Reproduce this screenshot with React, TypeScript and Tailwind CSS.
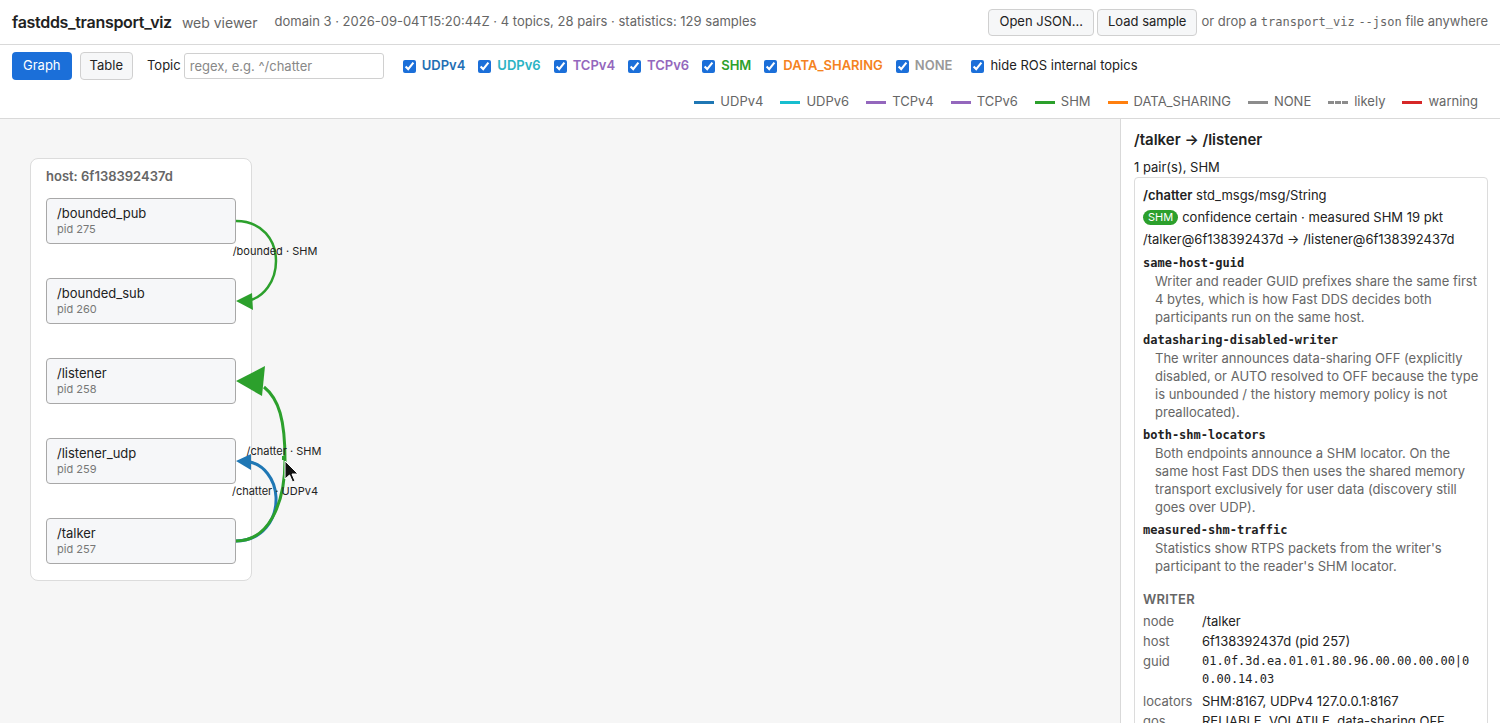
import React from "react"

const sans = "font-['Inter','Liberation_Sans',Arial,sans-serif]"
const mono = "font-['DejaVu_Sans_Mono',Menlo,monospace]"

const filters = [
  { label: "UDPv4", color: "text-[#1f6fb4]" },
  { label: "UDPv6", color: "text-[#2bb3c4]" },
  { label: "TCPv4", color: "text-[#9467bd]" },
  { label: "TCPv6", color: "text-[#9467bd]" },
  { label: "SHM", color: "text-[#2ca02c]" },
  { label: "DATA_SHARING", color: "text-[#f58220]" },
  { label: "NONE", color: "text-[#999999]" },
]

const legend = [
  { label: "UDPv4", line: "bg-[#1f77b4]" },
  { label: "UDPv6", line: "bg-[#17becf]" },
  { label: "TCPv4", line: "bg-[#9467bd]" },
  { label: "TCPv6", line: "bg-[#9467bd]" },
  { label: "SHM", line: "bg-[#2ca02c]" },
  { label: "DATA_SHARING", line: "bg-[#ff7f0e]" },
  { label: "NONE", line: "bg-[#8c8c8c]" },
]

const nodes = [
  { name: "/bounded_pub", pid: 275 },
  { name: "/bounded_sub", pid: 260 },
  { name: "/listener", pid: 258 },
  { name: "/listener_udp", pid: 259 },
  { name: "/talker", pid: 257 },
]

const reasons = [
  {
    id: "same-host-guid",
    text: "Writer and reader GUID prefixes share the same first 4 bytes, which is how Fast DDS decides both participants run on the same host.",
  },
  {
    id: "datasharing-disabled-writer",
    text: "The writer announces data-sharing OFF (explicitly disabled, or AUTO resolved to OFF because the type is unbounded / the history memory policy is not preallocated).",
  },
  {
    id: "both-shm-locators",
    text: "Both endpoints announce a SHM locator. On the same host Fast DDS then uses the shared memory transport exclusively for user data (discovery still goes over UDP).",
  },
  {
    id: "measured-shm-traffic",
    text: "Statistics show RTPS packets from the writer's participant to the reader's SHM locator.",
  },
]

function Edges() {
  // canvas coordinates (page y - 119)
  return (
    <svg className="absolute left-0 top-0" width="1120" height="604" viewBox="0 0 1120 604">
      {/* /bounded SHM */}
      <path d="M236 102 C262 102 276 121 276 142 C276 163 263 178 250 181" fill="none" stroke="#2ca02c" strokeWidth="2.5" />
      <polygon points="236,182 252,174 253,191" fill="#2ca02c" />
      {/* /chatter UDPv4 */}
      <path d="M236 422 C262 422 277 401 276 378 C275 359 263 346 250 343" fill="none" stroke="#1f77b4" strokeWidth="3" />
      <polygon points="236,342 251,335 251,351" fill="#1f77b4" />
      {/* /chatter SHM */}
      <path d="M236 422 C268 422 285 386 285 341 C285 301 279 280 264 268" fill="none" stroke="#2ca02c" strokeWidth="3" />
      <polygon points="236,262 265,247 262,277" fill="#2ca02c" />
      <rect x="282" y="337" width="4" height="4" fill="#2ca02c" />
      <g fontFamily="Inter, 'Liberation Sans', Arial, sans-serif" fontSize="11" fill="#222">
        <text x="275" y="136" textAnchor="middle">/bounded · SHM</text>
        <text x="284" y="336" textAnchor="middle">/chatter · SHM</text>
        <text x="275" y="376" textAnchor="middle">/chatter · UDPv4</text>
      </g>
      {/* mouse cursor */}
      <path d="M285 342 L285 360 L289.5 356 L292.5 363 L295 362 L292 355 L298 355 Z" fill="#111" stroke="#fff" strokeWidth="1" />
    </svg>
  )
}

export default function App() {
  return (
    <div className={`${sans} flex h-[723px] w-[1500px] flex-col overflow-hidden bg-white text-[13px] text-[#222]`}>
      {/* header */}
      <header className="flex h-[45px] shrink-0 items-center border-b border-[#d9d9d9] px-3">
        <span className="text-[16px] font-semibold tracking-[-0.3px] text-[#222]">fastdds_transport_viz</span>
        <span className="ml-[10px] text-[14px] text-[#666]">web viewer</span>
        <span className="ml-[17px] text-[13px] text-[#666]">
          domain 3 · 2026-09-04T15:20:44Z · 4 topics, 28 pairs · statistics: 129 samples
        </span>
        <div className="ml-auto flex items-center gap-[3px]">
          <button className="h-[27px] rounded-[4px] border border-[#d0d0d0] bg-[#f6f7f8] px-[10px] text-[13px]">Open JSON…</button>
          <button className="h-[27px] rounded-[4px] border border-[#d0d0d0] bg-[#f6f7f8] px-[10px] text-[13px]">Load sample</button>
          <span className="ml-[1px] text-[13px] text-[#666]">
            or drop a <span className={`${mono} text-[12px]`}>transport_viz</span>{" "}
            <span className={`${mono} text-[12px]`}>--json</span> file anywhere
          </span>
        </div>
      </header>

      {/* toolbar */}
      <div className="shrink-0 border-b border-[#d9d9d9]">
        <div className="flex h-[41px] items-center px-3 pt-[1px]">
          <button className="h-[28px] rounded-[4px] bg-[#1b6fd9] px-[11px] text-[13px] text-white">Graph</button>
          <button className="ml-[8px] h-[28px] rounded-[4px] border border-[#d0d0d0] bg-[#f6f7f8] px-[9px] text-[13px]">Table</button>
          <span className="ml-[14px] text-[13px]">Topic</span>
          <input
            className="ml-[3px] h-[26px] w-[200px] rounded-[3px] border border-[#d0d0d0] px-[5px] text-[13px] outline-none placeholder:text-[#888]"
            placeholder="regex, e.g. ^/chatter"
          />
          <div className="ml-[19px] flex items-center gap-[13px]">
            {filters.map((f) => (
              <label key={f.label} className="flex items-center gap-[6px]">
                <input type="checkbox" defaultChecked className="m-0 h-[13px] w-[13px] accent-[#1b6fd9]" />
                <span className={`text-[13px] font-semibold ${f.color}`}>{f.label}</span>
              </label>
            ))}
            <label className="ml-[6px] flex items-center gap-[6px]">
              <input type="checkbox" defaultChecked className="m-0 h-[13px] w-[13px] accent-[#1b6fd9]" />
              <span className="text-[13px] text-[#222]">hide ROS internal topics</span>
            </label>
          </div>
        </div>
        <div className="flex h-[32px] items-center justify-end gap-[17px] pr-[22px] text-[13px] text-[#666]">
          {legend.map((l) => (
            <span key={l.label} className="flex items-center gap-[6px]">
              <span className={`h-[3px] w-[20px] ${l.line}`} />
              {l.label}
            </span>
          ))}
          <span className="flex items-center gap-[6px]">
            <span className="w-[20px] border-t-[3px] border-dashed border-[#8c8c8c]" />
            likely
          </span>
          <span className="flex items-center gap-[6px]">
            <span className="h-[3px] w-[20px] bg-[#d62728]" />
            warning
          </span>
        </div>
      </div>

      {/* main */}
      <div className="flex min-h-0 flex-1">
        <div className="relative flex-1 bg-[#f6f6f6]">
          <div className="ml-[30px] mt-[39px] flex w-[222px] flex-col rounded-[8px] border border-[#dcdcdc] bg-white px-[15px] pb-[16px] pt-[8px]">
            <div className="text-[13px] font-semibold leading-[18px] text-[#666]">host: 6f138392437d</div>
            <div className="mt-[13px] flex flex-col gap-[34px]">
              {nodes.map((n) => (
                <div key={n.name} className="flex h-[46px] w-[190px] flex-col justify-center rounded-[4px] border border-[#a8a8a8] bg-[#f6f7f9] pl-[10px]">
                  <div className="text-[13px] leading-[17px] text-[#222]">{n.name}</div>
                  <div className="text-[11px] leading-[15px] text-[#777]">pid {n.pid}</div>
                </div>
              ))}
            </div>
          </div>
          <Edges />
        </div>

        <aside className="w-[380px] shrink-0 overflow-hidden border-l border-[#d9d9d9] bg-white pl-[13px] pr-3 pt-[11px]">
          <div className="text-[15px] font-semibold leading-[20px]">/talker → /listener</div>
          <div className="mt-[8px] text-[13px] leading-[18px]">1 pair(s), SHM</div>
          <div className="mt-[1px] rounded-[4px] border border-[#dcdcdc] px-[8px] pt-[6px]">
            <div className="leading-[22px]">
              <span className="font-semibold">/chatter</span> std_msgs/msg/String
            </div>
            <div className="flex items-center leading-[22px]">
              <span className="mr-[4px] rounded-full bg-[#2ca02c] px-[5px] text-[11px] leading-[15px] text-white">SHM</span>
              confidence certain · measured SHM 19 pkt
            </div>
            <div className="leading-[22px]">/talker@6f138392437d → /listener@6f138392437d</div>
            <div className="mt-[4px] flex flex-col gap-[5px]">
              {reasons.map((r) => (
                <div key={r.id}>
                  <div className={`${mono} text-[12px] font-bold leading-[18px]`}>{r.id}</div>
                  <div className="ml-[12px] text-[13px] leading-[18px] text-[#666]">{r.text}</div>
                </div>
              ))}
            </div>
            <div className="mt-[15px] text-[13px] font-semibold leading-[18px] tracking-[0.3px] text-[#666]">WRITER</div>
            <div className="mt-[3px] grid grid-cols-[59px_1fr] text-[13px] leading-[20px]">
              <div className="text-[#666]">node</div>
              <div>/talker</div>
              <div className="text-[#666]">host</div>
              <div>6f138392437d (pid 257)</div>
              <div className="text-[#666]">guid</div>
              <div className={`${mono} w-[270px] break-all pb-[3px] pt-[1px] text-[12px] leading-[18px]`}>
                01.0f.3d.ea.01.01.80.96.00.00.00.00|00.00.14.03
              </div>
              <div className="text-[#666]">locators</div>
              <div>SHM:8167, UDPv4 127.0.0.1:8167</div>
              <div className="text-[#666]">qos</div>
              <div>RELIABLE, VOLATILE, data-sharing OFF</div>
            </div>
          </div>
        </aside>
      </div>
    </div>
  )
}
